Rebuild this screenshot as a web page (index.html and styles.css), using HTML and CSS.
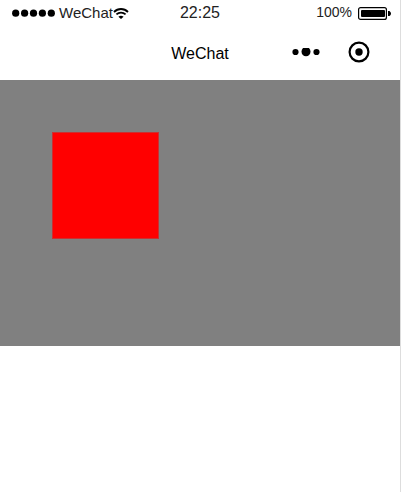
FILE: index.html
```html
<!DOCTYPE html>
<html lang="en">
<head>
<meta charset="utf-8">
<meta name="viewport" content="width=device-width, initial-scale=1">
<title>WeChat</title>
<link rel="stylesheet" href="styles.css">
</head>
<body>
<div class="phone">
  <div class="status">
    <div class="carrier">
      <svg class="signal" width="44" height="8" viewBox="0 0 44 8" aria-hidden="true">
        <circle cx="3.700" cy="4.200" r="3.600"/><circle cx="12.600" cy="4.200" r="3.600"/><circle cx="21.500" cy="4.200" r="3.600"/><circle cx="30.400" cy="4.200" r="3.600"/><circle cx="39.300" cy="4.200" r="3.600"/>
      </svg>
      <span class="label">WeChat</span>
      <svg width="16" height="12" viewBox="0 0 16 12" aria-hidden="true">
        <path d="M1 5C5 1 11 1 15 5M3.400 7.400c2.600-2.500 6.600-2.500 9.200 0" fill="none" stroke="#000" stroke-width="1.800"/>
        <path d="M5.400 9.700c1.600-1.400 3.600-1.400 5.200 0L8 12z"/>
      </svg>
    </div>
    <time class="clock">22:25</time>
    <div class="power">
      <span class="label">100%</span>
      <svg width="33" height="13" viewBox="0 0 33 13" aria-hidden="true">
        <rect x=".6" y=".6" width="27.800" height="11.800" rx="2" fill="none" stroke="#000" stroke-width="1.200"/>
        <rect x="3" y="3" width="24" height="7" rx="1"/>
        <path d="M30 4h1.500q1.500 1 1.500 2.500t-1.500 2.500H30z"/>
      </svg>
    </div>
  </div>
  <header class="nav">
    <h1 class="title">WeChat</h1>
    <div class="actions">
      <button class="action" type="button" aria-label="More">
        <svg width="28" height="22" viewBox="0 0 28 22" aria-hidden="true">
          <circle cx="3.500" cy="11" r="3.100"/><path d="M11 7h6q1.500 1.500 1.500 3.700a4.500 4.500 0 0 1-9 0Q9.500 8.500 11 7z"/><circle cx="24.500" cy="11" r="3.100"/>
        </svg>
      </button>
      <button class="action" type="button" aria-label="Close">
        <svg width="22" height="22" viewBox="0 0 22 22" aria-hidden="true">
          <circle cx="11" cy="11" r="9.400" fill="none" stroke="#000" stroke-width="2.200"/><circle cx="11" cy="11" r="3.700"/>
        </svg>
      </button>
    </div>
  </header>
  <main class="stage">
    <div class="box"></div>
  </main>
</div>
</body>
</html>
```
FILE: styles.css
```css
* {
  box-sizing: border-box;
}

body {
  margin: 0;
  background: #fff;
  color: #222;
  font-family: "Liberation Sans", Arial, sans-serif;
}

svg {
  display: block;
}

.phone {
  min-height: 100vh;
  border-right: 1px solid #ddd;
}

.status,
.nav {
  display: grid;
  grid-template-columns: 1fr auto 1fr;
  align-items: center;
  padding: 0 12px;
}

.status {
  height: 26px;
}

.carrier,
.power {
  display: flex;
  align-items: center;
}

.carrier {
  font-size: 15px;
}

.signal {
  margin-right: 3px;
}

.power {
  justify-content: flex-end;
  gap: 6px;
  margin-right: -3px;
  font-size: 14px;
}

.label {
  padding-bottom: 2px;
}

.clock {
  font-size: 16px;
}

.nav {
  height: 54px;
  padding-right: 30px;
  padding-left: 30px;
}

.title {
  grid-column: 2;
  margin: 0;
  padding-top: 2px;
  color: #000;
  font-size: 16px;
  font-weight: 400;
}

.actions {
  display: flex;
  justify-content: flex-end;
  gap: 28px;
  padding-bottom: 2px;
}

.action {
  padding: 0;
  border: 0;
  background: none;
}

.stage {
  height: 266px;
  padding: 52px;
  background: #808080;
}

.box {
  width: 107px;
  height: 107px;
  border: 1px solid #c83232;
  background: #f00;
}
```
